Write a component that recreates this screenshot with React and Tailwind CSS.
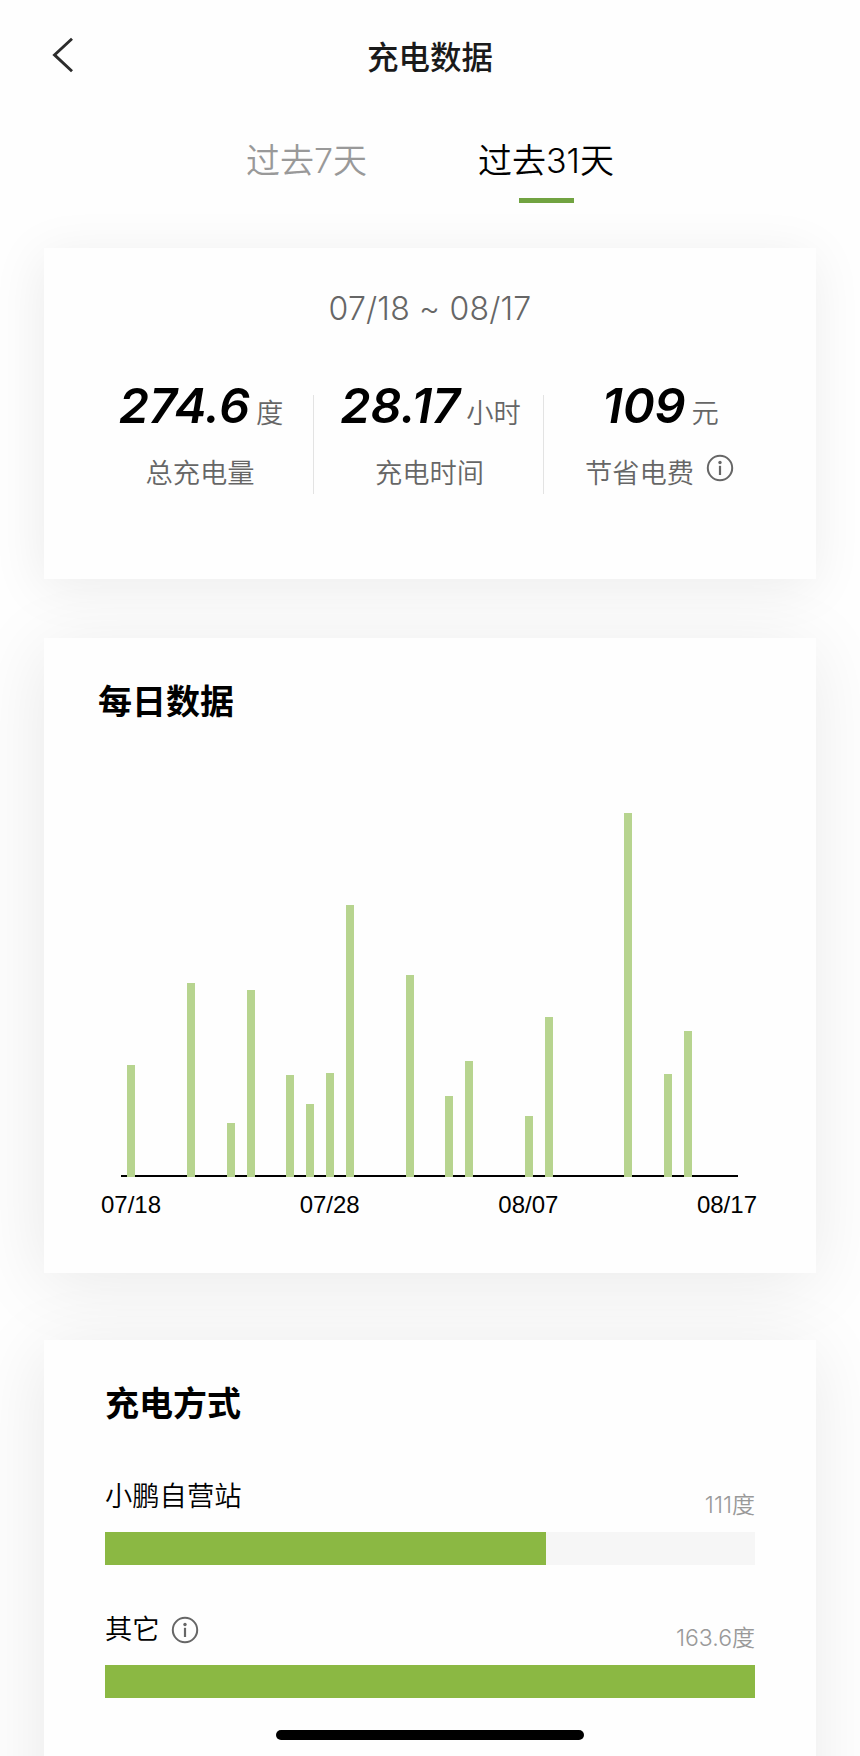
import { useState } from 'react';

const tabs = [
  { key: 'week', label: '过去7天' },
  { key: 'month', label: '过去31天' },
];

const summary = [
  { value: '274.6', unit: '度', label: '总充电量' },
  { value: '28.17', unit: '小时', label: '充电时间' },
  { value: '109', unit: '元', label: '节省电费', info: true },
];

// one entry per day, 07/18 - 08/17, bar height in px
const daily = [
  112, 0, 0, 194, 0, 54, 187, 0, 102, 73, 104, 272, 0, 0, 202, 0,
  81, 116, 0, 0, 61, 160, 0, 0, 0, 364, 0, 103, 146, 0, 0,
];

const axisLabels = ['07/18', '07/28', '08/07', '08/17'];

const methods = [
  { name: '小鹏自营站', amount: 111 },
  { name: '其它', amount: 163.6, info: true },
];

function InfoIcon({ className }) {
  return (
    <svg className={className} width="28" height="28" viewBox="0 0 28 28" fill="none">
      <circle cx="14" cy="14" r="12.2" stroke="#666" strokeWidth="2" />
      <circle cx="14" cy="8.5" r="1.7" fill="#666" />
      <path d="M14 11.8v9.2" stroke="#666" strokeWidth="2.2" />
    </svg>
  );
}

function Header() {
  return (
    <header className="grid h-[114px] grid-cols-3 items-center px-[50px]">
      <button className="mb-[4px] w-fit" aria-label="返回">
        <svg width="25" height="36" viewBox="0 0 25 36" fill="none">
          <path d="M22 1.8L4.5 17.9L22 34.2" stroke="#2c2c2c" strokeWidth="2.9" />
        </svg>
      </button>
      <h1 className="pt-[2px] text-center text-[31.5px] font-medium text-[#1a1a1a]">充电数据</h1>
    </header>
  );
}

function Tabs({ active, onChange }) {
  return (
    <nav className="flex h-[134px] justify-center gap-[111px] pt-[22px]">
      {tabs.map((tab) => (
        <button
          key={tab.key}
          onClick={() => onChange(tab.key)}
          className={`flex h-fit flex-col items-center text-[34px] leading-[50px] font-[350] ${
            active === tab.key ? 'text-black' : 'text-[#999]'
          }`}
        >
          {tab.label}
          {active === tab.key && <span className="mt-[12px] h-[5px] w-[55px] bg-[#71a341]" />}
        </button>
      ))}
    </nav>
  );
}

function Summary() {
  return (
    <section className="h-[331px] shrink-0 bg-[#fefefe] pt-[41px] shadow-[-3px_8px_50px_rgba(0,0,0,0.075)]">
      <p className="text-center text-[32px] leading-[40px] font-[350] tracking-[0.2px] text-[#666]">07/18 ~ 08/17</p>
      <div className="mx-auto mt-[47px] flex w-[690px]">
        {summary.map((item, i) => (
          <div key={item.label} className="flex flex-1">
            {i > 0 && <div className="mt-[19px] -ml-[2px] h-[99px] w-px bg-[#e3e3e3]" />}
            <div className="flex flex-1 flex-col items-center">
              <div className="flex items-baseline gap-[6px] pl-[2px] leading-[60px]">
                <span className="text-[48.5px] font-semibold text-black italic">{item.value}</span>
                <span className="text-[27.3px] font-[350] text-[#666]">{item.unit}</span>
              </div>
              <div className="mt-[10px] flex items-center gap-[12px] text-[27.3px] leading-[40px] font-[350] text-[#666]">
                {item.label}
                {item.info && <InfoIcon className="mb-[12px]" />}
              </div>
            </div>
          </div>
        ))}
      </div>
    </section>
  );
}

function DailyChart() {
  return (
    <section className="mt-[59px] h-[635px] shrink-0 bg-[#fefefe] pt-[39px] shadow-[-3px_10px_70px_rgba(0,0,0,0.085)]">
      <h2 className="pl-[54px] text-[34px] leading-[50px] font-semibold text-black">每日数据</h2>
      <div className="mt-[48px] ml-[77.5px] w-[616px]">
        <div className="grid h-[400px] grid-cols-31 items-end">
          {daily.map((height, i) => (
            <div key={i} className="z-10 -mb-[2px] w-[8px] justify-self-center bg-[#b7d48f]" style={{ height }} />
          ))}
        </div>
        <div className="-ml-[0.5px] h-[2px] w-[617px] bg-black" />
      </div>
      <div className="mt-[13px] ml-[57px] flex w-[656px] justify-between font-['Liberation_Sans',sans-serif] text-[24px] leading-[30px] text-black">
        {axisLabels.map((label) => (
          <span key={label}>{label}</span>
        ))}
      </div>
    </section>
  );
}

function Methods() {
  const max = Math.max(...methods.map((m) => m.amount));

  return (
    <section className="mt-[67px] h-[520px] shrink-0 bg-[#fefefe] px-[61px] pt-[39px] shadow-[-3px_10px_70px_rgba(0,0,0,0.085)]">
      <h2 className="text-[34px] leading-[50px] font-semibold text-black">充电方式</h2>
      <div className="mt-[48px] flex flex-col gap-[45px]">
        {methods.map((m) => (
          <div key={m.name}>
            <div className="flex h-[55px] justify-between">
              <div className="flex h-[40px] items-center gap-[11px] text-[27.3px] font-[350] text-black">
                {m.name}
                {m.info && <InfoIcon />}
              </div>
              <span className="pt-[11px] text-[23px] leading-[34px] font-[350] text-[#999]">{m.amount}度</span>
            </div>
            <div className="h-[33px] bg-[#f6f6f6]">
              <div className="h-full bg-[#8bb843]" style={{ width: `${(m.amount / max) * 100}%` }} />
            </div>
          </div>
        ))}
      </div>
    </section>
  );
}

export default function App() {
  const [active, setActive] = useState('month');

  return (
    <div className="relative h-[1756px] w-[860px] overflow-hidden bg-[#fefefe] font-['Inter','Noto_Sans_CJK_SC',sans-serif]">
      <Header />
      <Tabs active={active} onChange={setActive} />
      <main className="flex flex-col px-[44px]">
        <Summary />
        <DailyChart />
        <Methods />
      </main>
      <div className="absolute bottom-[16px] left-1/2 h-[10px] w-[308px] -translate-x-1/2 rounded-full bg-black" />
    </div>
  );
}
